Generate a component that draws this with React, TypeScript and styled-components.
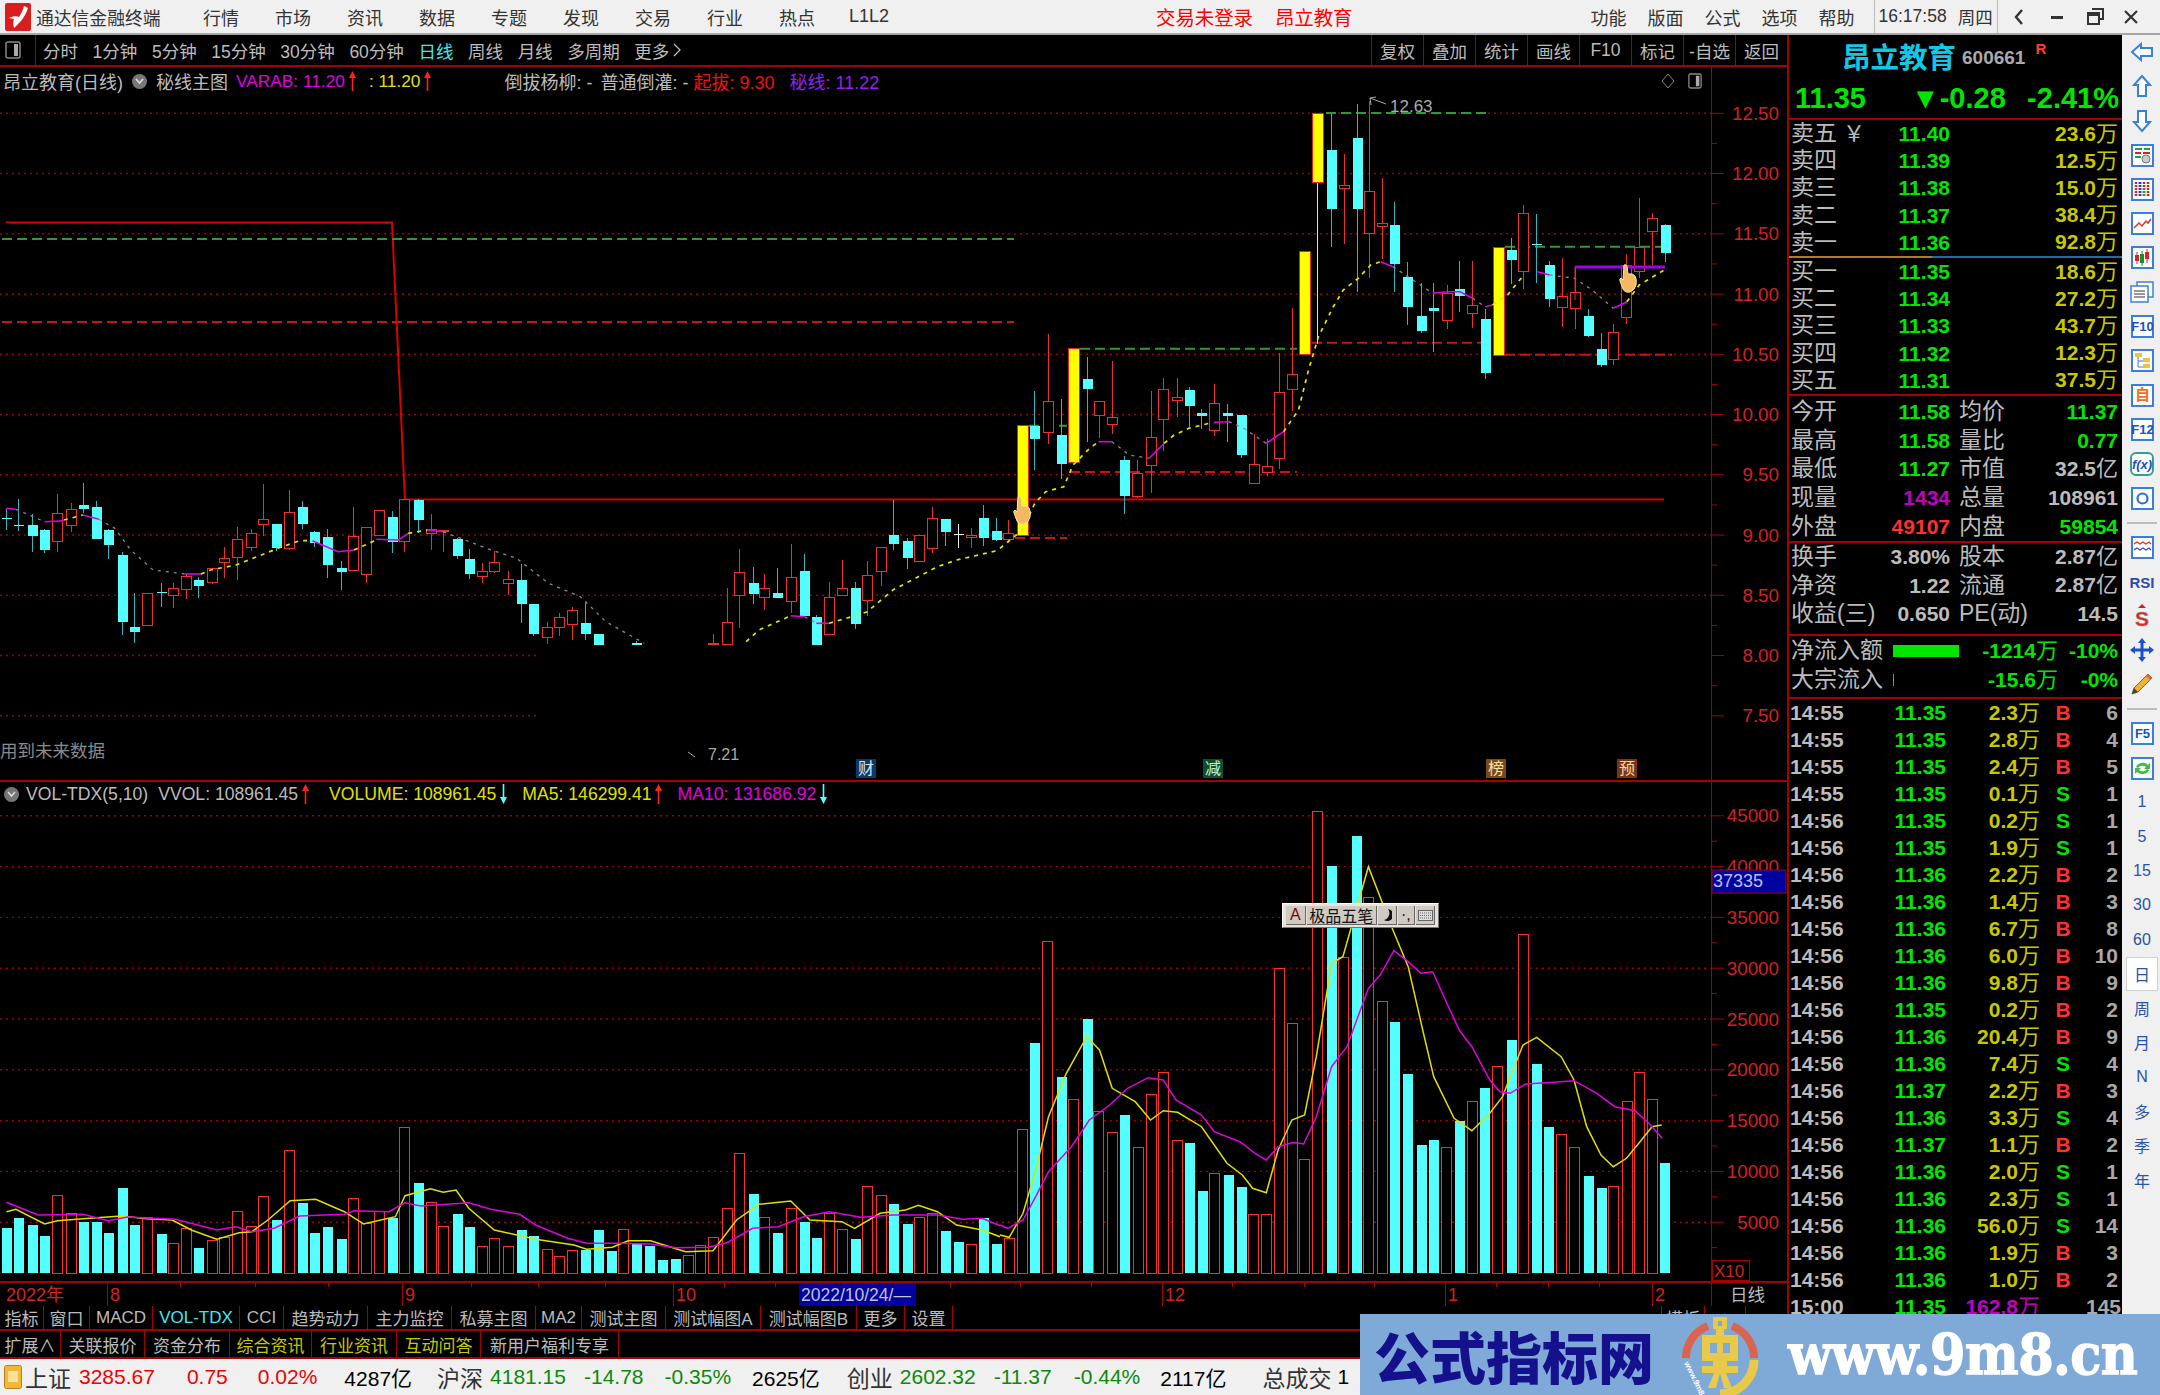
import * as React from "react";
import styled, { createGlobalStyle } from "styled-components";

const FONT = `"Liberation Sans", "Noto Sans CJK SC", sans-serif`;
const RED_LINE = "#a80000";
const GREEN = "#00e600";
const OLIVE = "#c8c800";
const GRAY = "#bcbcbc";

const GlobalStyle = createGlobalStyle`
  html, body { margin: 0; padding: 0; background: #000; }
  body { font-family: ${FONT}; overflow: hidden; }
  * { box-sizing: border-box; }
`;

/* ---------- page frame ---------- */
const Page = styled.div`
  position: relative;
  width: 2160px;
  height: 1395px;
  display: flex;
  flex-direction: column;
  overflow: hidden;
  background: #000;
`;
const Body = styled.div`
  display: flex;
  height: 1324px;
`;
const MainColumn = styled.div`
  width: 1787px;
  display: flex;
  flex-direction: column;
`;

/* ---------- title bar ---------- */
const TitleBar = styled.div`
  height: 35px;
  display: flex;
  align-items: center;
  background: #f0f0f0;
  border-bottom: 2px solid #a6a6a6;
  color: #333;
  font-size: 18px;
`;
const AppName = styled.span`
  margin-left: 5px;
  width: 149px;
  font-size: 17.8px;
  white-space: nowrap;
`;
const MenuItem = styled.span`
  width: 72px;
  text-align: center;
`;
const LoginInfo = styled.div`
  margin-left: 251px;
  display: flex;
  gap: 22px;
  color: #f00;
  font-size: 19.4px;
`;
const RightMenu = styled.div`
  margin-left: 238px;
  display: flex;
  gap: 21px;
`;
const ClockCell = styled.div`
  margin-left: 19px;
  height: 33px;
  display: flex;
  align-items: center;
  gap: 11px;
  padding: 0 4px;
  border-left: 1px solid #bbb;
  border-right: 1px solid #bbb;
  font-size: 17.5px;
  white-space: nowrap;
`;
const WindowButtons = styled.div`
  margin-left: 15px;
  display: flex;
  align-items: center;
  gap: 19px;
  color: #333;
`;

/* ---------- toolbar ---------- */
const Toolbar = styled.div`
  height: 32px;
  display: flex;
  align-items: stretch;
  background: #000;
  border-bottom: 2px solid ${RED_LINE};
  color: ${GRAY};
  font-size: 17.5px;
`;
const ToggleCell = styled.div`
  width: 36px;
  display: flex;
  align-items: center;
  justify-content: center;
  border-right: 1px solid ${RED_LINE};
  padding-right: 10px;
`;
const PeriodList = styled.div`
  margin-left: 7px;
  display: flex;
  align-items: center;
  gap: 14.6px;
`;
const Period = styled.span<{ $active?: boolean }>`
  white-space: nowrap;
  color: ${(p) => (p.$active ? "#40e8f0" : GRAY)};
`;
const ToolCells = styled.div`
  margin-left: auto;
  display: flex;
`;
const ToolCell = styled.div`
  width: 52px;
  display: flex;
  align-items: center;
  justify-content: center;
  border-left: 1px solid ${RED_LINE};
  white-space: nowrap;
`;

/* ---------- chart legends ---------- */
const InfoRow = styled.div`
  width: 1712px;
  height: 28px;
  display: flex;
  align-items: center;
  padding-left: 3px;
  border-right: 1px solid ${RED_LINE};
  font-size: 18px;
  white-space: nowrap;
  color: ${GRAY};
`;
const LegendRow = styled(InfoRow)`
  height: 24px;
  padding-left: 4px;
  font-size: 17.6px;
`;
const Tag = styled.span<{ $color?: string; $ml?: number; $size?: number }>`
  color: ${(p) => p.$color || GRAY};
  margin-left: ${(p) => p.$ml || 0}px;
  ${(p) => (p.$size ? `font-size: ${p.$size}px;` : "")}
`;
const RoundBadge = styled.span<{ $ml: number; $mr?: number }>`
  width: 15px;
  height: 15px;
  margin-left: ${(p) => p.$ml}px;
  margin-right: ${(p) => p.$mr ?? 7}px;
  border-radius: 50%;
  background: #777;
  display: inline-flex;
  align-items: center;
  justify-content: center;
  flex: none;
`;
const Corner = styled.div`
  margin-left: auto;
  display: flex;
  align-items: center;
  gap: 13px;
  padding-right: 9px;
`;

/* ---------- chart panes ---------- */
const PricePane = styled.div`
  height: 715px;
  border-bottom: 2px solid ${RED_LINE};
`;
const VolumePane = styled.div`
  position: relative;
  height: 501px;
  border-bottom: 2px solid ${RED_LINE};
`;
const ChartSvg = styled.svg`
  display: block;
  background: #000;
`;
const AxisText = styled.text`
  font-family: ${FONT};
  font-size: 18.8px;
  fill: #d42020;
  text-anchor: end;
  dominant-baseline: central;
`;
const ChartNote = styled.text<{ $color?: string; $size?: number }>`
  font-family: ${FONT};
  font-size: ${(p) => p.$size || 17}px;
  fill: ${(p) => p.$color || "#999"};
  dominant-baseline: central;
`;
const ImeBar = styled.div`
  position: absolute;
  left: 1282px;
  top: 121px;
  width: 157px;
  height: 25px;
  padding: 2px 3px;
  display: flex;
  gap: 1px;
  background: #e8e4dc;
  border: 1px solid #fff;
  border-right-color: #777;
  border-bottom-color: #777;
`;
const ImeCell = styled.span<{ $w: number; $color?: string }>`
  width: ${(p) => p.$w}px;
  display: flex;
  align-items: center;
  justify-content: center;
  background: #cfcbc3;
  border-right: 1px solid #666;
  border-bottom: 1px solid #666;
  font-size: 16px;
  color: ${(p) => p.$color || "#111"};
  white-space: nowrap;
`;

/* ---------- tab rows ---------- */
const TabRow = styled.div<{ $h: number }>`
  height: ${(p) => p.$h}px;
  display: flex;
  border-bottom: 2px solid ${RED_LINE};
  font-size: 17px;
  background: #000;
`;
const TabCell = styled.span<{ $w: number; $color?: string }>`
  width: ${(p) => p.$w}px;
  display: flex;
  align-items: center;
  justify-content: center;
  border-right: 1px solid ${RED_LINE};
  color: ${(p) => p.$color || GRAY};
  white-space: nowrap;
`;

/* ---------- quote panel ---------- */
const QuotePanel = styled.div`
  width: 335px;
  height: 100%;
  background: #000;
  border-left: 2px solid ${RED_LINE};
  overflow: hidden;
`;
const QuoteHead = styled.div`
  height: 85px;
  border-bottom: 2px solid ${RED_LINE};
`;
const NameRow = styled.div`
  height: 40px;
  display: flex;
  align-items: center;
  padding-left: 53px;
  white-space: nowrap;
`;
const StockName = styled.span`
  font-size: 28.5px;
  font-weight: 700;
  color: #10c8e8;
`;
const StockCode = styled.span`
  margin-left: 6px;
  padding-top: 5px;
  font-size: 19px;
  font-weight: 700;
  color: #aaa;
`;
const StockFlag = styled.sup`
  margin-left: 10px;
  font-size: 15px;
  font-weight: 700;
  color: #ff3a3a;
  align-self: flex-start;
  margin-top: 5px;
`;
const PriceRow = styled.div`
  height: 43px;
  display: flex;
  align-items: center;
  padding: 3px 3px 0 6px;
  color: ${GREEN};
  font-size: 29px;
  font-weight: 700;
  white-space: nowrap;
`;
const DepthGrid = styled.div<{ $pt?: number; $pb?: number }>`
  padding-top: ${(p) => p.$pt || 0}px;
  padding-bottom: ${(p) => p.$pb || 0}px;
`;
const SplitLine = styled.div`
  height: 2px;
  background: linear-gradient(to right, #b07a28 0 143px, #2a68a0 143px);
`;
const Rule = styled.div`
  height: 2px;
  background: ${RED_LINE};
`;
const Row = styled.div<{ $h: number; $cols: string }>`
  height: ${(p) => p.$h}px;
  display: grid;
  grid-template-columns: ${(p) => p.$cols};
  grid-template-rows: 100%;
  align-items: center;
  line-height: 1;
  white-space: nowrap;
`;
const Label = styled.span<{ $pl?: number }>`
  padding-left: ${(p) => p.$pl ?? 2}px;
  font-size: 23px;
  color: ${GRAY};
  letter-spacing: 0;
`;
const Num = styled.span<{ $color?: string; $center?: boolean }>`
  font-size: 21px;
  font-weight: 700;
  text-align: ${(p) => (p.$center ? "center" : "right")};
  color: ${(p) => p.$color || GREEN};
`;
const Unit = styled.span`
  font-weight: 400;
  font-size: 22px;
`;
const TimeCell = styled.span`
  padding-left: 1px;
  font-size: 21px;
  font-weight: 700;
  color: ${GRAY};
`;
const FlowBar = styled.span`
  display: block;
  height: 12px;
  background: ${GREEN};
`;

/* ---------- right icon rail ---------- */
const Rail = styled.div`
  width: 38px;
  display: flex;
  flex-direction: column;
  align-items: center;
  background: #f0f0f0;
  padding-left: 2px;
`;
const RailItem = styled.div<{ $active?: boolean }>`
  width: 32px;
  height: 34.3px;
  flex: none;
  display: flex;
  align-items: center;
  justify-content: center;
  font-size: 16px;
  color: #2a52a8;
  background: ${(p) => (p.$active ? "#fff" : "transparent")};
  box-shadow: ${(p) => (p.$active ? "inset 0 0 0 1px #d0d0d0" : "none")};
`;
const RailSep = styled.div`
  width: 30px;
  height: 15px;
  flex: none;
  display: flex;
  align-items: center;
  &::after {
    content: "";
    width: 100%;
    height: 2px;
    background: #bdbdbd;
  }
`;

/* ---------- status bar + banner ---------- */
const StatusBar = styled.div`
  height: 36px;
  display: flex;
  align-items: center;
  padding-left: 4px;
  background: #f0f0f0;
  font-size: 21px;
  white-space: nowrap;
`;
const StatusTag = styled.span<{ $ml: number; $color?: string; $bold?: boolean; $size?: number }>`
  margin-left: ${(p) => p.$ml}px;
  color: ${(p) => p.$color || "#333"};
  font-size: ${(p) => p.$size || 21}px;
  font-weight: ${(p) => (p.$bold ? 700 : 400)};
`;
const Banner = styled.div`
  position: absolute;
  right: 0;
  bottom: 0;
  width: 800px;
  height: 81px;
  display: flex;
  align-items: center;
  padding-left: 14px;
  background: #7faad8;
`;
const BannerTitle = styled.span`
  width: 306px;
  font-size: 56px;
  font-weight: 900;
  color: #15108c;
  white-space: nowrap;
`;
const BannerUrl = styled.span`
  margin-left: 28px;
  font-family: "DejaVu Serif", "Liberation Serif", serif;
  font-size: 51px;
  font-weight: 700;
  color: #fff;
  letter-spacing: -0.6px;
  -webkit-text-stroke: 1.2px #fff;
  white-space: nowrap;
  transform: scaleY(1.08);
`;

/* ---------- traced chart data (coordinates as read off the crops) ---------- */
type Kind = "r" | "c" | "y" | "w";
type Candle = [number, Kind, number, number, number, number];
const px7 = (x: number, y: number): [number, number] => [1000 + x / 2.01, 60 + y / 3];
const px8 = (x: number, y: number): [number, number] => [x / 1.568, 470 + y / 3];

const leftCandles: Candle[] = [
  [10, "c", 115, 140, 143, 178], [29, "c", 85, 161, 164, 180], [50, "c", 130, 161, 196, 242],
  [69, "c", 175, 178, 237, 245], [90, "r", 70, 130, 213, 242], [111, "r", 95, 117, 164, 182],
  [130, "c", 35, 102, 115, 125], [151, "c", 90, 107, 205, 205], [170, "c", 175, 176, 222, 263],
  [191, "c", 243, 251, 453, 493], [210, "c", 365, 467, 484, 516], [231, "r", 368, 368, 466, 466],
  [252, "c", 335, 364, 367, 408], [271, "r", 335, 355, 375, 412], [292, "r", 310, 318, 358, 385],
  [311, "c", 318, 328, 345, 380], [332, "r", 292, 293, 335, 340], [351, "r", 228, 265, 277, 322],
  [372, "r", 167, 207, 262, 327], [393, "r", 175, 188, 232, 240], [413, "r", 40, 148, 163, 195],
  [433, "c", 160, 160, 232, 240], [453, "r", 58, 125, 235, 237], [473, "c", 90, 107, 160, 175],
  [493, "c", 180, 184, 215, 228], [513, "c", 175, 197, 282, 322], [534, "c", 270, 291, 304, 358],
  [554, "r", 108, 198, 300, 300], [574, "r", 170, 170, 312, 335], [594, "r", 120, 120, 195, 195],
  [614, "c", 120, 138, 212, 245], [634, "r", 87, 87, 213, 243], [655, "c", 85, 88, 147, 185],
  [676, "r", 130, 177, 190, 238], [695, "r", 178, 180, 184, 242], [716, "c", 200, 203, 255, 265],
  [735, "c", 233, 265, 310, 325], [756, "r", 275, 302, 317, 335], [775, "r", 240, 275, 303, 305],
  [796, "r", 300, 328, 340, 373], [817, "c", 280, 328, 398, 455], [836, "c", 400, 400, 490, 495],
  [857, "r", 453, 470, 500, 520], [876, "r", 427, 442, 470, 495], [897, "r", 408, 420, 462, 508],
  [917, "c", 395, 455, 488, 508], [937, "c", 490, 490, 522, 522], [998, "c", 510, 516, 522, 522],
  [1118, "r", 490, 520, 522, 522], [1140, "r", 350, 455, 522, 522], [1158, "r", 235, 305, 376, 470],
  [1180, "c", 288, 337, 368, 400], [1198, "r", 310, 355, 380, 418], [1219, "c", 292, 365, 382, 382],
  [1240, "r", 220, 320, 393, 427], [1260, "c", 250, 300, 436, 436], [1280, "c", 432, 437, 522, 522],
  [1300, "r", 332, 382, 493, 493], [1320, "r", 268, 355, 376, 376], [1340, "c", 332, 350, 458, 475],
  [1360, "r", 270, 315, 390, 435], [1381, "r", 230, 230, 303, 345], [1400, "c", 88, 193, 219, 238],
  [1422, "c", 200, 211, 260, 295], [1441, "r", 194, 194, 272, 272], [1462, "r", 108, 145, 235, 245],
  [1482, "c", 143, 143, 183, 225], [1502, "w", 160, 188, 191, 232], [1522, "r", 170, 194, 201, 232],
  [1542, "c", 103, 140, 200, 225],
];
const rightCandles: Candle[] = [
  [-8, "c", 1370, 1410, 1438, 1440], [17, "r", 1378, 1420, 1438, 1445], [44, "y", 1095, 1095, 1425, 1425],
  [69, "c", 990, 1095, 1133, 1228], [96, "r", 820, 1024, 1115, 1150], [123, "c", 1013, 1122, 1210, 1255],
  [147, "y", 865, 865, 1205, 1205], [174, "c", 888, 955, 985, 1142], [199, "r", 1023, 1023, 1065, 1130],
  [225, "r", 900, 1070, 1092, 1120], [250, "c", 1185, 1198, 1305, 1360], [276, "r", 1198, 1238, 1308, 1310],
  [303, "r", 990, 1132, 1214, 1295], [328, "r", 950, 988, 1078, 1170], [355, "r", 950, 1010, 1020, 1068],
  [379, "c", 978, 987, 1035, 1098], [405, "c", 1045, 1055, 1066, 1105], [430, "r", 968, 1028, 1110, 1125],
  [457, "c", 1030, 1055, 1065, 1143], [485, "c", 1063, 1063, 1183, 1192], [510, "r", 1118, 1213, 1268, 1268],
  [536, "r", 1135, 1218, 1235, 1245], [561, "r", 875, 996, 1195, 1225], [587, "r", 740, 942, 988, 1050],
  [612, "y", 572, 572, 882, 882], [638, "y", 158, 158, 365, 850], [665, "c", 160, 266, 445, 558],
  [691, "r", 280, 375, 385, 548], [717, "c", 130, 230, 445, 692], [742, "r", 120, 394, 520, 652],
  [768, "r", 352, 488, 498, 595], [792, "c", 424, 492, 610, 692], [819, "c", 604, 649, 737, 792],
  [846, "c", 667, 766, 810, 815], [871, "c", 667, 740, 750, 872], [898, "r", 672, 698, 780, 805],
  [922, "c", 600, 685, 706, 752], [949, "r", 600, 735, 760, 800], [974, "c", 745, 775, 935, 955],
  [1000, "y", 560, 560, 885, 885], [1027, "c", 532, 568, 598, 670], [1052, "r", 433, 460, 632, 683],
  [1078, "c", 460, 550, 553, 666], [1103, "c", 600, 613, 715, 738], [1130, "r", 590, 708, 740, 797],
  [1155, "r", 620, 695, 745, 805], [1182, "c", 743, 766, 824, 828], [1208, "c", 815, 865, 913, 918],
  [1233, "r", 790, 816, 898, 913], [1259, "r", 578, 614, 772, 790], [1285, "r", 410, 562, 632, 650],
  [1311, "r", 455, 474, 512, 612], [1336, "c", 490, 491, 576, 604],
];

type Seg = ["y" | "g" | "m", number[]];
const leftTrend: Seg[] = [
  ["m", [10, 115, 25, 118]], ["g", [25, 118, 70, 155]], ["m", [70, 155, 100, 152]], ["y", [100, 150, 130, 135]],
  ["m", [130, 135, 155, 148]], ["g", [155, 148, 180, 175, 205, 240, 240, 300, 290, 312]], ["m", [290, 312, 315, 312]],
  ["y", [315, 312, 330, 300, 370, 285, 440, 232, 470, 212, 490, 212]], ["m", [490, 212, 530, 245, 555, 240]],
  ["y", [555, 240, 590, 210]], ["m", [590, 208, 625, 210, 640, 190]], ["y", [640, 190, 670, 180]], ["m", [670, 180, 695, 185]],
  ["g", [695, 185, 770, 240, 810, 265, 860, 340, 910, 380, 950, 455, 1010, 520]],
  ["y", [1170, 515, 1190, 480, 1240, 437]], ["m", [1240, 437, 1262, 440]], ["g", [1262, 440, 1280, 460]], ["m", [1280, 460, 1300, 460]],
  ["y", [1300, 460, 1345, 435, 1360, 425, 1400, 360, 1470, 290, 1500, 270, 1568, 240]],
];
const rightTrend: Seg[] = [
  ["y", [0, 1465, 20, 1440, 45, 1410, 70, 1330, 92, 1295, 128, 1280, 147, 1215, 180, 1165, 198, 1145]],
  ["m", [198, 1145, 225, 1145]], ["g", [225, 1145, 260, 1185, 300, 1195]], ["m", [300, 1195, 330, 1150]],
  ["y", [330, 1150, 350, 1125, 380, 1105, 420, 1090]], ["m", [430, 1087, 460, 1085]], ["g", [460, 1085, 490, 1105, 535, 1150]],
  ["m", [535, 1150, 570, 1115]], ["y", [570, 1115, 600, 1050, 620, 930, 640, 830, 670, 740, 690, 690, 720, 655, 745, 615, 765, 605]],
  ["m", [765, 605, 790, 620]], ["g", [790, 620, 830, 660, 870, 700]], ["m", [870, 700, 900, 695, 925, 695, 950, 715]],
  ["g", [950, 715, 975, 740]], ["m", [975, 740, 990, 735]], ["y", [990, 735, 1020, 705, 1050, 650]],
  ["m", [1080, 635, 1105, 645]], ["g", [1105, 645, 1155, 655, 1190, 690, 1233, 745]], ["m", [1233, 745, 1260, 725]],
  ["y", [1260, 725, 1285, 675, 1335, 630]],
];

// volume tops: [x on crop, kind, top on crop]
const volLeft: [number, Kind, number][] = [
  [10,"c",1342],[29,"c",1310],[50,"c",1333],[69,"c",1365],[90,"r",1244],[111,"r",1298],[130,"c",1324],[151,"c",1324],[170,"c",1356],
  [191,"c",1221],[210,"c",1333],[231,"r",1312],[252,"c",1360],[271,"r",1388],[292,"r",1343],[311,"c",1400],[332,"r",1380],[351,"r",1370],
  [372,"r",1294],[393,"r",1338],[413,"r",1249],[433,"c",1316],[453,"r",1109],[473,"c",1265],[493,"c",1356],[513,"c",1338],[534,"c",1373],
  [554,"r",1253],[574,"r",1330],[594,"r",1292],[614,"c",1311],[634,"r",1042],[655,"c",1207],[676,"r",1267],[695,"r",1338],[716,"c",1298],
  [735,"c",1338],[756,"r",1398],[775,"r",1375],[796,"r",1398],[817,"c",1347],[836,"c",1365],[857,"r",1407],[876,"r",1428],[897,"r",1411],
  [917,"c",1407],[937,"c",1347],[958,"c",1410],[977,"r",1348],[998,"c",1385],[1018,"c",1396],[1038,"c",1437],[1058,"c",1433],[1078,"r",1425],
  [1098,"r",1395],[1118,"r",1370],[1140,"r",1285],[1158,"r",1118],[1180,"c",1239],[1198,"r",1312],[1219,"c",1356],[1240,"r",1285],[1260,"c",1324],
  [1280,"c",1370],[1300,"r",1298],[1320,"r",1348],[1340,"c",1374],[1360,"r",1217],[1381,"r",1244],[1400,"c",1270],[1422,"c",1329],[1441,"r",1312],
  [1462,"r",1298],[1482,"c",1351],[1502,"c",1383],[1522,"r",1392],[1542,"c",1312],[1562,"c",1388],
];
const volRight: [number, Kind, number][] = [
  [18,"r",1375],[44,"r",1047],[67,"c",785],[93,"r",484],[120,"c",888],[143,"r",957],[170,"c",713],[193,"r",992],[220,"r",1056],[243,"c",1001],
  [270,"r",1101],[296,"r",943],[320,"r",876],[346,"r",1079],[370,"c",1086],[396,"c",1230],[420,"r",1178],[446,"c",1181],[472,"c",1217],[496,"r",1303],
  [522,"r",1303],[546,"r",565],[572,"r",728],[596,"r",1137],[622,"r",92],[648,"c",254],[672,"r",530],[698,"c",164],[722,"r",350],[748,"r",664],
  [772,"c",722],[798,"c",879],[825,"c",1091],[848,"c",1077],[875,"r",1101],[899,"c",1019],[925,"r",962],[948,"c",920],[975,"r",858],[1002,"c",776],
  [1025,"r",462],[1050,"c",848],[1075,"c",1037],[1100,"r",1061],[1125,"r",1101],[1152,"c",1185],[1178,"c",1221],[1202,"r",1217],[1228,"r",962],
  [1252,"r",876],[1278,"r",957],[1301,"c",1145],
];
const ma5L = [10,1295,25,1288,70,1332,90,1322,130,1316,190,1308,230,1316,270,1320,300,1350,340,1378,375,1358,395,1355,420,1320,455,1262,495,1258,540,1295,570,1332,620,1310,635,1247,675,1226,695,1237,715,1230,735,1285,775,1350,840,1378,900,1395,920,1408,960,1402,985,1382,1020,1382,1075,1415,1118,1412,1155,1320,1190,1273,1240,1263,1270,1320,1320,1325,1340,1345,1380,1300,1420,1290,1440,1276,1470,1295,1500,1335,1540,1350,1568,1370];
const ma10L = [10,1267,60,1305,130,1303,170,1322,200,1311,240,1315,275,1318,340,1350,370,1340,395,1355,430,1345,470,1308,540,1303,555,1292,610,1295,635,1268,660,1278,735,1268,770,1288,815,1303,840,1335,890,1375,920,1390,970,1390,1020,1392,1060,1403,1110,1402,1140,1388,1180,1345,1220,1340,1260,1310,1300,1295,1350,1312,1400,1305,1470,1305,1510,1318,1540,1315,1568,1337];
const ma5R = [0,1365,18,1372,45,1300,70,1170,95,1010,130,880,170,770,195,810,220,925,265,965,295,1020,320,992,348,997,395,1040,445,1150,475,1185,495,1225,522,1238,545,1110,572,1020,597,1005,620,830,650,550,672,530,722,260,770,450,800,560,830,760,850,890,890,1015,925,1052,960,1000,985,950,1000,890,1025,795,1052,772,1100,830,1125,900,1150,1040,1178,1125,1202,1160,1228,1135,1252,1090,1278,1040,1297,1035];
const ma10R = [0,1335,15,1345,45,1320,70,1250,95,1175,140,1100,175,1020,215,975,250,925,290,893,320,900,345,960,395,1005,420,1055,470,1085,500,1120,522,1140,545,1100,575,1087,595,1092,620,1010,650,860,680,800,722,625,745,585,772,512,800,545,825,580,848,575,870,650,900,750,925,800,960,900,980,935,1000,940,1030,912,1085,907,1125,902,1170,940,1205,980,1245,992,1275,1035,1298,1075];

const toPoints = (raw: number[], map: (x: number, y: number) => [number, number]) => {
  const out: string[] = [];
  for (let i = 0; i < raw.length; i += 2) {
    const [x, y] = map(raw[i], raw[i + 1]);
    out.push(`${x.toFixed(1)},${y.toFixed(1)}`);
  }
  return out.join(" ");
};

const CANDLE_COLORS = { r: "#f02c2c", c: "#55ffff", y: "#ffff00", w: "#f0f0f0" };

const CandleMark = ({ c, map }: { c: Candle; map: (x: number, y: number) => [number, number] }) => {
  const [zx, kind, hi, top, bot, lo] = c;
  const x = Math.round(map(zx, 0)[0]) + 0.5;
  const yOf = (v: number) => Math.round(map(0, v)[1]) + 0.5;
  const color = CANDLE_COLORS[kind];
  const wick = kind === "c" ? "#2cb8c0" : color;
  const w = kind === "y" ? 11 : 10;
  return (
    <g shapeRendering="crispEdges">
      <line x1={x} x2={x} y1={yOf(hi)} y2={yOf(lo)} stroke={wick} strokeWidth={1} />
      <rect
        x={x - w / 2}
        y={yOf(top)}
        width={w}
        height={Math.max(yOf(bot) - yOf(top), 1)}
        fill={kind === "r" ? "#000" : color}
        stroke={kind === "y" ? "#e82020" : kind === "r" ? color : "none"}
        strokeWidth={1}
      />
    </g>
  );
};

const Trend = ({ seg, map }: { seg: Seg; map: (x: number, y: number) => [number, number] }) => {
  const [k, raw] = seg;
  const styleOf = {
    y: { stroke: "#e6e600", strokeWidth: 1.7, strokeDasharray: "4 5" },
    g: { stroke: "#8a8a8a", strokeWidth: 1.3, strokeDasharray: "3 5" },
    m: { stroke: "#e000e8", strokeWidth: 1.6, strokeDasharray: undefined },
  }[k];
  return <polyline points={toPoints(raw, map)} fill="none" {...styleOf} />;
};

const Pointer = ({ x, y }: { x: number; y: number }) => (
  <g transform={`translate(${x - 9} ${y - 16})`}>
    <path
      d="M5 1 q2-1 3 1 l1 8 q5-1 7 2 q2 3 1 9 q-1 5-6 7 q-5 1-7-3 l-3-8 q-1-2 1-3 l2 2 z"
      fill="#f4b860"
      stroke="#ffe4b0"
      strokeWidth={1}
    />
  </g>
);

const PriceChart = () => {
  const prices = [12.5, 12, 11.5, 11, 10.5, 10, 9.5, 9, 8.5, 8, 7.5];
  const yOf = (p: number) => 113.3 + (12.5 - p) * 120.5;
  const minor = [12.25, 11.75, 11.25, 10.75, 10.25, 9.75, 9.25, 8.75, 8.25, 7.75];
  return (
    <ChartSvg width={1787} height={685} viewBox="0 95 1787 685">
      {prices.map((p) => (
        <line
          key={p}
          x1={0}
          x2={p < 8.5 ? 537 : 1711}
          y1={yOf(p)}
          y2={yOf(p)}
          stroke="#a00000"
          strokeWidth={1.4}
          strokeDasharray="2 4"
        />
      ))}
      {/* support / resistance levels */}
      <polyline points="6,222.5 392,222.5 405,500" fill="none" stroke="#d80000" strokeWidth={2} />
      <line x1={405} x2={1664} y1={499.5} y2={499.5} stroke="#d80000" strokeWidth={2} />
      {[[2, 1014, 239], [1326, 1490, 113], [1080, 1297, 348.7], [1505, 1665, 246.7], [1029, 1067, 425.7]].map(([a, b, y]) => (
        <line key={a} x1={a} x2={b} y1={y} y2={y} stroke="#2f9a2f" strokeWidth={2} strokeDasharray="10 5" />
      ))}
      {[[2, 1014, 322], [1312, 1488, 342.7], [1070, 1297, 472], [1505, 1672, 354.7], [1000, 1067, 538]].map(([a, b, y]) => (
        <line key={a} x1={a} x2={b} y1={y} y2={y} stroke="#c81414" strokeWidth={2} strokeDasharray="10 5" />
      ))}
      {leftCandles.map((c) => (
        <CandleMark key={c[0]} c={c} map={px8} />
      ))}
      {rightCandles.map((c) => (
        <CandleMark key={c[0]} c={c} map={px7} />
      ))}
      {leftTrend.map((s, i) => (
        <Trend key={i} seg={s} map={px8} />
      ))}
      {rightTrend.map((s, i) => (
        <Trend key={i} seg={s} map={px7} />
      ))}
      <line x1={1575} x2={1665} y1={267} y2={267} stroke="#a000f0" strokeWidth={3} />
      <line x1={1575} x2={1575} y1={267} y2={300} stroke="#e82828" strokeWidth={1} />
      <Pointer x={1022} y={512} />
      <Pointer x={1628} y={280} />

      <path d="M1386 104 L1370 98 M1370 98 l1 7 M1370 98 l6 -1" stroke="#aaa" strokeWidth={1} fill="none" />
      <ChartNote x={1390} y={106} $size={17} $color="#aaa">12.63</ChartNote>
      <path d="M688 752 l7 5" stroke="#aaa" strokeWidth={1} fill="none" />
      <ChartNote x={708} y={754} $size={16} $color="#aaa">7.21</ChartNote>
      <ChartNote x={0} y={751} $size={17.5} $color="#8a8a8a">用到未来数据</ChartNote>

      {[
        [866, "财", "#0c3a68", "#d8e8f8"],
        [1213, "减", "#0c5030", "#c8f0d0"],
        [1496, "榜", "#7a4a10", "#f8e0b0"],
        [1627, "预", "#7a3410", "#f8d8b0"],
      ].map(([x, t, bg, fg]) => (
        <g key={t as string}>
          <rect x={(x as number) - 10} y={759} width={20} height={19} fill={bg as string} />
          <ChartNote x={(x as number) - 8} y={768} $size={16} $color={fg as string}>{t}</ChartNote>
        </g>
      ))}

      {/* price axis */}
      <line x1={1711.5} x2={1711.5} y1={95} y2={780} stroke={RED_LINE} strokeWidth={1} />
      {prices.map((p) => (
        <g key={p}>
          <line x1={1711} x2={1724} y1={yOf(p)} y2={yOf(p)} stroke={RED_LINE} />
          <AxisText x={1779} y={yOf(p)}>{p.toFixed(2)}</AxisText>
        </g>
      ))}
      {minor.map((p) => (
        <line key={p} x1={1711} x2={1717} y1={yOf(p)} y2={yOf(p)} stroke={RED_LINE} />
      ))}
    </ChartSvg>
  );
};

const VolBar = ({ x, kind, top }: { x: number; kind: Kind; top: number }) => {
  const left = Math.round(x - 5) + 0.5;
  const y = Math.round(top) + 0.5;
  return (
    <rect
      x={left}
      y={y}
      width={10}
      height={1273 - y}
      fill={kind === "c" ? "#55ffff" : "#000"}
      stroke={kind === "c" ? "none" : "#ff2c2c"}
      shapeRendering="crispEdges"
    />
  );
};

const VolumeChart = () => {
  const levels = [45000, 40000, 35000, 30000, 25000, 20000, 15000, 10000, 5000];
  const yOf = (v: number) => 1273 - (v / 5000) * 50.8;
  const v9 = (x: number, y: number): [number, number] => [1000 + x / 1.96, 780 + y / 3];
  const v10 = (x: number, y: number): [number, number] => [x / 1.568, 780 + y / 3];
  return (
    <ChartSvg width={1787} height={475} viewBox="0 806 1787 475">
      {levels.map((v) => (
        <line key={v} x1={0} x2={1711} y1={yOf(v)} y2={yOf(v)} stroke="#a00000" strokeWidth={1.4} strokeDasharray="2 4" />
      ))}
      {volLeft.map(([x, k, t]) => (
        <VolBar key={x} x={x / 1.568} kind={k} top={780 + t / 3} />
      ))}
      {volRight.map(([x, k, t]) => (
        <VolBar key={x} x={1000 + x / 1.96} kind={k} top={780 + t / 3} />
      ))}
      <polyline points={toPoints(ma5L, v10)} fill="none" stroke="#e0e000" strokeWidth={1.5} />
      <polyline points={toPoints(ma5R, v9)} fill="none" stroke="#e0e000" strokeWidth={1.5} />
      <polyline points={toPoints(ma10L, v10)} fill="none" stroke="#e000e0" strokeWidth={1.5} />
      <polyline points={toPoints(ma10R, v9)} fill="none" stroke="#e000e0" strokeWidth={1.5} />

      <line x1={1711.5} x2={1711.5} y1={806} y2={1281} stroke={RED_LINE} />
      {levels.map((v) => (
        <g key={v}>
          <line x1={1711} x2={1724} y1={yOf(v)} y2={yOf(v)} stroke={RED_LINE} />
          <AxisText x={1779} y={yOf(v)}>{v}</AxisText>
          <line x1={1711} x2={1717} y1={yOf(v) + 25.4} y2={yOf(v) + 25.4} stroke={RED_LINE} />
        </g>
      ))}
      <rect x={1712} y={870} width={74} height={23} fill="#0000a0" stroke={RED_LINE} />
      <ChartNote x={1713} y={881} $size={18} $color="#b8c0e8">37335</ChartNote>
      <rect x={1712.5} y={1260.5} width={37} height={20} fill="#000" stroke={RED_LINE} />
      <ChartNote x={1714} y={1271} $size={17} $color="#d42020">X10</ChartNote>
    </ChartSvg>
  );
};

const DateAxis = () => {
  const months: [number, string][] = [[107, "8"], [402, "9"], [673, "10"], [1162, "12"], [1445, "1"], [1652, "2"]];
  const ticks = [180, 255, 328, 471, 538, 605, 724, 775, 950, 1020, 1091, 1232, 1304, 1374, 1496, 1548, 1599];
  return (
    <ChartSvg width={1787} height={23} viewBox="0 1283 1787 23">
      <ChartNote x={6} y={1295} $size={18} $color="#d42020">2022年</ChartNote>
      {months.map(([x, t]) => (
        <g key={t}>
          <line x1={x + 0.5} x2={x + 0.5} y1={1283} y2={1306} stroke={RED_LINE} />
          <ChartNote x={x + 3} y={1295} $size={18} $color="#d42020">{t}</ChartNote>
        </g>
      ))}
      {ticks.map((x) => (
        <line key={x} x1={x + 0.5} x2={x + 0.5} y1={1283} y2={1287} stroke={RED_LINE} />
      ))}
      <rect x={799} y={1283} width={117} height={23} fill="#0000a0" />
      <ChartNote x={801} y={1295} $size={17.5} $color="#c4c4c4">2022/10/24/—</ChartNote>
      <line x1={1711.5} x2={1711.5} y1={1283} y2={1306} stroke={RED_LINE} />
      <ChartNote x={1730} y={1295} $size={17.5} $color={GRAY}>日线</ChartNote>
    </ChartSvg>
  );
};

/* ---------- small drawings ---------- */
const AppLogo = () => (
  <svg width="26" height="28" viewBox="0 0 26 28" style={{ marginLeft: 5, flex: "none" }}>
    <rect width="26" height="28" rx="2" fill="#d81e1e" />
    <path d="M19 3 L23 5 C21 12 16 19 9 25 C8 21 8 18 9 16 L4 15 C8 13 12 13 14 14 C16 11 18 7 19 3Z" fill="#fff" />
  </svg>
);
const PanelToggle = ({ size = 16 }: { size?: number }) => (
  <svg width={size} height={size + 2} viewBox="0 0 16 18">
    <rect x="1" y="1" width="14" height="16" rx="2" fill="none" stroke="#888" strokeWidth="1.5" />
    <rect x="9" y="3" width="4" height="12" fill="#aaa" />
  </svg>
);
const Chevron = () => (
  <svg width="10" height="16" viewBox="0 0 10 16" style={{ marginLeft: 3 }}>
    <path d="M2 2 L8 8 L2 14" fill="none" stroke={GRAY} strokeWidth="1.3" />
  </svg>
);
const TickArrow = ({ up, color }: { up?: boolean; color: string }) => (
  <svg width="9" height="22" viewBox="0 0 9 22" style={{ marginLeft: 3, flex: "none" }}>
    {up ? (
      <path d="M4.5 1 L8 8 H5.3 V21 H3.7 V8 H1Z" fill={color} />
    ) : (
      <path d="M4.5 21 L8 14 H5.3 V1 H3.7 V14 H1Z" fill={color} />
    )}
  </svg>
);
const ChevronBadge = () => (
  <svg width="9" height="7" viewBox="0 0 9 7">
    <path d="M1 1 L4.5 5 L8 1" fill="none" stroke="#ddd" strokeWidth="1.6" />
  </svg>
);

const BannerLogo = () => (
  <svg width="80" height="81" viewBox="0 0 80 81" style={{ flex: "none" }}>
    <path d="M6 44 A34 34 0 0 1 28 12" fill="none" stroke="#d96550" strokeWidth="8" />
    <path d="M52 12 A34 34 0 0 1 74 44" fill="none" stroke="#d96550" strokeWidth="8" />
    <path d="M74 46 A34 34 0 0 1 40 80" fill="none" stroke="#e8c94a" strokeWidth="9" />
    <path
      d="M33 3 h14 v12 h-3 v6 h14 v26 h-11 v5 h11 v7 h-12 l6 15 h-8 l-4 -15 l-4 15 h-8 l6 -15 h-12 v-7 h11 v-5 h-11 v-26 h14 v-6 h-3z"
      fill="#e8c94a"
    />
    <rect x="30" y="29" width="7" height="10" fill="#7faad8" />
    <rect x="43" y="29" width="7" height="10" fill="#7faad8" />
    <rect x="38" y="7" width="4" height="5" fill="#7faad8" />
    <text x="0" y="0" transform="translate(4 49) rotate(64)" fontSize="8" fontWeight="700" fill="#fff" fontFamily={FONT}>
      www.9m8.cn
    </text>
  </svg>
);

const Frame = ({ children }: { children?: React.ReactNode }) => (
  <svg width="23" height="23" viewBox="0 0 23 23">
    <rect x="1" y="1" width="21" height="21" fill="#fff" stroke="#3a80d8" strokeWidth="2" />
    {children}
  </svg>
);
const ArrowShape = ({ d }: { d: string }) => (
  <svg width="24" height="24" viewBox="0 0 24 24">
    <path d={d} fill="#fff" stroke="#3a80d8" strokeWidth="2" />
  </svg>
);
const iconText = (t: string, color = "#2050c0", size = 13) => (
  <text x="11.5" y="16" textAnchor="middle" fontSize={size} fontWeight="700" fill={color} fontFamily={FONT}>
    {t}
  </text>
);

const railIcons: React.ReactNode[] = [
  <ArrowShape d="M2 12 L11 4 V8 H22 V16 H11 V20Z" />,
  <ArrowShape d="M12 2 L20 11 H16 V22 H8 V11 H4Z" />,
  <ArrowShape d="M12 22 L20 13 H16 V2 H8 V13 H4Z" />,
  <Frame>
    <path d="M4 5 h7 M13 5 h6" stroke="#20a040" strokeWidth="2" />
    <path d="M4 9 h6 M12 9 h7" stroke="#e02020" strokeWidth="2" />
    <path d="M4 13 h6" stroke="#20a040" strokeWidth="2" />
    <circle cx="15" cy="15" r="4" fill="#ccc" stroke="#777" />
  </Frame>,
  <Frame>
    <path d="M5 4 v15 M9 4 v15 M13 4 v15 M17 4 v15" stroke="#e02020" strokeWidth="2.5" strokeDasharray="2 1" />
    <path d="M9 4 v15" stroke="#2040d0" strokeWidth="2.5" strokeDasharray="2 1" />
    <path d="M13 10 v9" stroke="#20a040" strokeWidth="2.5" strokeDasharray="2 1" />
  </Frame>,
  <Frame>
    <path d="M3 16 L8 11 L11 14 L15 9 L17 11 L20 7" fill="none" stroke="#e03030" strokeWidth="1.5" />
  </Frame>,
  <Frame>
    <path d="M6 6 v12 M16 3 v14" stroke="#e02020" />
    <rect x="4" y="9" width="4" height="6" fill="#e02020" />
    <path d="M11 5 v15" stroke="#109030" />
    <rect x="9" y="8" width="4" height="9" fill="#109030" />
    <rect x="14" y="6" width="4" height="7" fill="#e02020" />
  </Frame>,
  <svg width="24" height="22" viewBox="0 0 24 22">
    <rect x="7" y="1" width="16" height="15" fill="#fff" stroke="#3a80d8" strokeWidth="1.5" />
    <rect x="1" y="5" width="17" height="16" fill="#fff" stroke="#3a80d8" strokeWidth="1.5" />
    <path d="M4 10 h11 M4 13 h11 M4 16 h11" stroke="#777" strokeWidth="1.5" />
  </svg>,
  <Frame>{iconText("F10")}</Frame>,
  <Frame>
    <path d="M7 8 V18 H12 M7 12 H12" fill="none" stroke="#3a80d8" />
    <rect x="4" y="4" width="7" height="4" fill="#f0c040" />
    <rect x="12" y="9" width="7" height="4" fill="#f0c040" />
    <rect x="12" y="15" width="7" height="4" fill="#f0c040" />
  </Frame>,
  <Frame>{iconText("自", "#f07020", 15)}</Frame>,
  <Frame>{iconText("F12")}</Frame>,
  <svg width="24" height="24" viewBox="0 0 24 24">
    <rect x="1" y="1" width="22" height="22" rx="5" fill="#fff" stroke="#30a090" strokeWidth="2" />
    <text x="12" y="17" textAnchor="middle" fontSize="13" fontStyle="italic" fontWeight="700" fill="#2050c0" fontFamily={FONT}>
      f(x)
    </text>
  </svg>,
  <Frame>
    <circle cx="11.5" cy="11.5" r="5" fill="none" stroke="#2a70d0" strokeWidth="2.2" />
  </Frame>,
];
const railIcons2: React.ReactNode[] = [
  <Frame>
    <path d="M3 8 l3 -2 l3 2 l3 -2 l3 2 l3 -2 l2 2" fill="none" stroke="#e03030" strokeWidth="1.3" />
    <path d="M3 14 l3 -2 l3 2 l3 -2 l3 2 l3 -2 l2 2" fill="none" stroke="#3050d0" strokeWidth="1.3" />
  </Frame>,
  <svg width="28" height="20" viewBox="0 0 28 20">
    <text x="14" y="16" textAnchor="middle" fontSize="15" fontWeight="700" fill="#2a4ab0" fontFamily={FONT}>
      RSI
    </text>
  </svg>,
  <svg width="24" height="26" viewBox="0 0 24 26">
    <path d="M12 1 l4 4 h-8z" fill="#d02020" />
    <text x="12" y="23" textAnchor="middle" fontSize="21" fontWeight="700" fill="#d82828" stroke="#999" strokeWidth=".5" fontFamily={FONT}>
      S
    </text>
  </svg>,
  <svg width="26" height="26" viewBox="0 0 26 26">
    <path
      d="M13 1 l4 5 h-2.5 v5.500 h5.500 v-2.500 l5 4 l-5 4 v-2.500 h-5.500 v5.500 h2.500 l-4 5 l-4 -5 h2.500 v-5.500 h-5.500 v2.500 l-5 -4 l5 -4 v2.500 h5.500 v-5.500 h-2.500z"
      fill="#1a50c8"
    />
  </svg>,
  <svg width="24" height="24" viewBox="0 0 24 24">
    <path d="M18 2 L22 6 L8 20 L2 22 L4 16Z" fill="#f0b030" stroke="#8a6a20" />
    <path d="M18 2 L22 6 L20 8 L16 4Z" fill="#e06060" />
    <path d="M4 16 L8 20 L2 22Z" fill="#444" />
  </svg>,
];
const railIcons3: React.ReactNode[] = [
  <Frame>{iconText("F5")}</Frame>,
  <Frame>
    <path d="M5 10 a7 6 0 0 1 12 -2 l2 -2 v6 h-6 l2 -2 a5 4 0 0 0 -8 1z" fill="#48b848" />
    <path d="M18 13 a7 6 0 0 1 -12 2 l-2 2 v-6 h6 l-2 2 a5 4 0 0 0 8 -1z" fill="#48b848" />
  </Frame>,
];
const railPeriods = ["1", "5", "15", "30", "60", "日", "周", "月", "N", "多", "季", "年"];

/* ---------- data ---------- */
const menuItems = ["行情", "市场", "资讯", "数据", "专题", "发现", "交易", "行业", "热点", "L1L2"];
const periods = ["分时", "1分钟", "5分钟", "15分钟", "30分钟", "60分钟", "日线", "周线", "月线", "多周期"];
const toolItems = ["复权", "叠加", "统计", "画线", "F10", "标记", "-自选", "返回"];
const sellers = [["卖五", "11.40", "23.6"], ["卖四", "11.39", "12.5"], ["卖三", "11.38", "15.0"], ["卖二", "11.37", "38.4"], ["卖一", "11.36", "92.8"]];
const buyers = [["买一", "11.35", "18.6"], ["买二", "11.34", "27.2"], ["买三", "11.33", "43.7"], ["买四", "11.32", "12.3"], ["买五", "11.31", "37.5"]];
const MAGENTA = "#c000c0";
const RED = "#ff3030";
const statsA: [string, string, string, string, string, string?][] = [
  ["今开", "11.58", GREEN, "均价", "11.37", GREEN],
  ["最高", "11.58", GREEN, "量比", "0.77", GREEN],
  ["最低", "11.27", GREEN, "市值", "32.5亿", GRAY],
  ["现量", "1434", MAGENTA, "总量", "108961", GRAY],
  ["外盘", "49107", RED, "内盘", "59854", GREEN],
];
const statsB: [string, string, string, string, string, string?][] = [
  ["换手", "3.80%", GRAY, "股本", "2.87亿", GRAY],
  ["净资", "1.22", GRAY, "流通", "2.87亿", GRAY],
  ["收益(三)", "0.650", GRAY, "PE(动)", "14.5", GRAY],
];
const trades: [string, string, string, string, number][] = [
  ["14:55", "11.35", "2.3", "B", 6], ["14:55", "11.35", "2.8", "B", 4], ["14:55", "11.35", "2.4", "B", 5], ["14:55", "11.35", "0.1", "S", 1],
  ["14:56", "11.35", "0.2", "S", 1], ["14:56", "11.35", "1.9", "S", 1], ["14:56", "11.36", "2.2", "B", 2], ["14:56", "11.36", "1.4", "B", 3],
  ["14:56", "11.36", "6.7", "B", 8], ["14:56", "11.36", "6.0", "B", 10], ["14:56", "11.36", "9.8", "B", 9], ["14:56", "11.35", "0.2", "B", 2],
  ["14:56", "11.36", "20.4", "B", 9], ["14:56", "11.36", "7.4", "S", 4], ["14:56", "11.37", "2.2", "B", 3], ["14:56", "11.36", "3.3", "S", 4],
  ["14:56", "11.37", "1.1", "B", 2], ["14:56", "11.36", "2.0", "S", 1], ["14:56", "11.36", "2.3", "S", 1], ["14:56", "11.36", "56.0", "S", 14],
  ["14:56", "11.36", "1.9", "B", 3], ["14:56", "11.36", "1.0", "B", 2], ["15:00", "11.35", "162.8", "", 145],
];
const tabsA: [string, number, string?][] = [
  ["指标", 44], ["窗口", 46], ["MACD", 63], ["VOL-TDX", 87, "#40e8f0"], ["CCI", 44], ["趋势动力", 84], ["主力监控", 84], ["私募主图", 84],
  ["MA2", 46], ["测试主图", 84], ["测试幅图A", 95], ["测试幅图B", 96], ["更多", 48], ["设置", 48],
];
const tabsB: [string, number, string?][] = [
  ["扩展∧", 61], ["关联报价", 84], ["资金分布", 85], ["综合资讯", 82, OLIVE], ["行业资讯", 85, OLIVE], ["互动问答", 84, OLIVE], ["新用户福利专享", 138],
];

const withUnit = (v: string) => {
  const m = v.match(/^(.*?)([万亿])$/);
  return m ? (
    <>
      {m[1]}
      <Unit>{m[2]}</Unit>
    </>
  ) : (
    v
  );
};

const DEPTH_COLS = "91px 70px 168px";
const STAT_COLS = "91px 70px 90px 78px";
const FLOW_COLS = "104px 87px 78px 60px";
const TRADE_COLS = "91px 66px 94px 46px 32px";

const DepthRows = ({ rows, h }: { rows: string[][]; h: number }) => (
  <>
    {rows.map(([l, p, v], i) => (
      <Row key={l} $h={h} $cols={DEPTH_COLS}>
        <Label>
          {l}
          {i === 0 && l === "卖五" && <Unit> ￥</Unit>}
        </Label>
        <Num>{p}</Num>
        <Num $color={OLIVE}>
          {v}
          <Unit>万</Unit>
        </Num>
      </Row>
    ))}
  </>
);

const StatRows = ({ rows, h }: { rows: typeof statsA; h: number }) => (
  <>
    {rows.map(([l, v, c, l2, v2, c2]) => (
      <Row key={l} $h={h} $cols={STAT_COLS}>
        <Label>{l}</Label>
        <Num $color={c}>{v}</Num>
        <Label $pl={9}>{l2}</Label>
        <Num $color={c2}>{withUnit(v2)}</Num>
      </Row>
    ))}
  </>
);

export default function App() {
  return (
    <Page>
      <GlobalStyle />
      <TitleBar>
        <AppLogo />
        <AppName>通达信金融终端</AppName>
        {menuItems.map((m) => (
          <MenuItem key={m}>{m}</MenuItem>
        ))}
        <LoginInfo>
          <span>交易未登录</span>
          <span>昂立教育</span>
        </LoginInfo>
        <RightMenu>
          {["功能", "版面", "公式", "选项", "帮助"].map((m) => (
            <span key={m}>{m}</span>
          ))}
        </RightMenu>
        <ClockCell>
          <span>16:17:58</span>
          <span>周四</span>
        </ClockCell>
        <WindowButtons>
          <svg width="12" height="18" viewBox="0 0 12 18"><path d="M9 2 L3 9 L9 16" fill="none" stroke="#333" strokeWidth="2.4" /></svg>
          <svg width="14" height="14" viewBox="0 0 14 14" style={{ marginLeft: 6 }}><rect x="1" y="6" width="12" height="3" fill="#333" /></svg>
          <svg width="17" height="17" viewBox="0 0 17 17" style={{ marginLeft: 4 }}>
            <path d="M5 1 h11 v10 h-3 M1 5 h11 v11 h-11z M1 5 v2 h11" fill="none" stroke="#333" strokeWidth="2" />
          </svg>
          <svg width="16" height="16" viewBox="0 0 16 16"><path d="M2 2 L14 14 M14 2 L2 14" stroke="#333" strokeWidth="2.2" /></svg>
        </WindowButtons>
      </TitleBar>

      <Body>
        <MainColumn>
          <Toolbar>
            <ToggleCell>
              <PanelToggle />
            </ToggleCell>
            <PeriodList>
              {periods.map((p) => (
                <Period key={p} $active={p === "日线"}>{p}</Period>
              ))}
              <Period>
                更多
                <Chevron />
              </Period>
            </PeriodList>
            <ToolCells>
              {toolItems.map((t) => (
                <ToolCell key={t}>{t}</ToolCell>
              ))}
            </ToolCells>
          </Toolbar>

          <PricePane>
            <InfoRow>
              <Tag>昂立教育(日线)</Tag>
              <RoundBadge $ml={9} $mr={9}><ChevronBadge /></RoundBadge>
              <Tag>秘线主图</Tag>
              <Tag $color="#e000e0" $ml={8} $size={17.3}>VARAB: 11.20</Tag>
              <TickArrow up color="#ff2020" />
              <Tag $color="#e0e000" $ml={12} $size={17.3}>: 11.20</Tag>
              <TickArrow up color="#ff2020" />
              <Tag $ml={72}>倒拔杨柳: -</Tag>
              <Tag $ml={8}>普通倒灌: -</Tag>
              <Tag $color="#f01010" $ml={5}>起拔: 9.30</Tag>
              <Tag $color="#9020f0" $ml={15}>秘线: 11.22</Tag>
              <Corner>
                <svg width="14" height="16" viewBox="0 0 14 16"><path d="M7 1 L13 8 L7 15 L1 8Z" fill="none" stroke="#888" /></svg>
                <PanelToggle size={14} />
              </Corner>
            </InfoRow>
            <PriceChart />
          </PricePane>

          <VolumePane>
            <LegendRow>
              <RoundBadge $ml={0}><ChevronBadge /></RoundBadge>
              <Tag>VOL-TDX(5,10)</Tag>
              <Tag $ml={10}>VVOL: 108961.45</Tag>
              <TickArrow up color="#ff2020" />
              <Tag $color="#e0e000" $ml={19}>VOLUME: 108961.45</Tag>
              <TickArrow color="#55ffff" />
              <Tag $color="#e0e000" $ml={14}>MA5: 146299.41</Tag>
              <TickArrow up color="#ff2020" />
              <Tag $color="#e000e0" $ml={14}>MA10: 131686.92</Tag>
              <TickArrow color="#55ffff" />
            </LegendRow>
            <VolumeChart />
            <ImeBar>
              <ImeCell $w={20} $color="#800000">A</ImeCell>
              <ImeCell $w={71}>极品五笔</ImeCell>
              <ImeCell $w={19}>
                <svg width="10" height="14" viewBox="0 0 10 14"><path d="M6 1 A6 6 0 1 1 2 12 A7 7 0 0 0 6 1Z" fill="#111" /></svg>
              </ImeCell>
              <ImeCell $w={18}>·,</ImeCell>
              <ImeCell $w={19}>
                <svg width="15" height="11" viewBox="0 0 15 11"><rect x=".5" y=".5" width="14" height="10" fill="#ddd" stroke="#666" /><path d="M2 3 h11 M2 5.500 h11 M2 8 h11" stroke="#666" strokeDasharray="1 1" /></svg>
              </ImeCell>
            </ImeBar>
          </VolumePane>

          <DateAxis />

          <TabRow $h={25}>
            {tabsA.map(([t, w, c]) => (
              <TabCell key={t} $w={w} $color={c}>{t}</TabCell>
            ))}
            <TabCell $w={709} />
            <TabCell $w={43}>模板</TabCell>
            <TabCell $w={41}>+</TabCell>
          </TabRow>
          <TabRow $h={28}>
            {tabsB.map(([t, w, c]) => (
              <TabCell key={t} $w={w} $color={c}>{t}</TabCell>
            ))}
          </TabRow>
        </MainColumn>

        <QuotePanel>
          <QuoteHead>
            <NameRow>
              <StockName>昂立教育</StockName>
              <StockCode>600661</StockCode>
              <StockFlag>R</StockFlag>
            </NameRow>
            <PriceRow>
              <span>11.35</span>
              <span style={{ marginLeft: 45 }}>▼-0.28</span>
              <span style={{ marginLeft: "auto" }}>-2.41%</span>
            </PriceRow>
          </QuoteHead>
          <DepthGrid>
            <DepthRows rows={sellers} h={27.2} />
          </DepthGrid>
          <SplitLine />
          <DepthGrid>
            <DepthRows rows={buyers} h={27.2} />
          </DepthGrid>
          <Rule />
          <DepthGrid $pt={1}>
            <StatRows rows={statsA} h={28.8} />
          </DepthGrid>
          <Rule />
          <DepthGrid $pb={7}>
            <StatRows rows={statsB} h={28.2} />
          </DepthGrid>
          <Rule />
          <DepthGrid $pb={3}>
            <Row $h={29} $cols={FLOW_COLS}>
              <Label>净流入额</Label>
              <FlowBar style={{ width: 66 }} />
              <Num>-1214<Unit>万</Unit></Num>
              <Num>-10%</Num>
            </Row>
            <Row $h={29} $cols={FLOW_COLS}>
              <Label>大宗流入</Label>
              <FlowBar style={{ width: 1 }} />
              <Num>-15.6<Unit>万</Unit></Num>
              <Num>-0%</Num>
            </Row>
          </DepthGrid>
          <Rule />
          {trades.map(([t, p, v, f, n], i) => (
            <Row key={i} $h={27} $cols={TRADE_COLS}>
              <TimeCell>{t}</TimeCell>
              <Num>{p}</Num>
              <Num $color={f ? OLIVE : MAGENTA}>
                {v}
                <Unit>万</Unit>
              </Num>
              <Num $center $color={f === "B" ? RED : GREEN}>{f}</Num>
              <Num $color="#a8a8a8">{n}</Num>
            </Row>
          ))}
        </QuotePanel>

        <Rail>
          {railIcons.map((ic, i) => (
            <RailItem key={i}>{ic}</RailItem>
          ))}
          <RailSep />
          {railIcons2.map((ic, i) => (
            <RailItem key={i}>{ic}</RailItem>
          ))}
          <RailSep />
          {railIcons3.map((ic, i) => (
            <RailItem key={i}>{ic}</RailItem>
          ))}
          {railPeriods.map((p) => (
            <RailItem key={p} $active={p === "日"}>{p}</RailItem>
          ))}
        </Rail>
      </Body>

      <StatusBar>
        <svg width="18" height="24" viewBox="0 0 18 24">
          <rect x=".5" y=".5" width="17" height="23" rx="2" fill="#f0b838" stroke="#b88020" />
          <rect x="4" y="6" width="10" height="11" fill="#f8e098" />
        </svg>
        <StatusTag $ml={3} $size={23}>上证</StatusTag>
        <StatusTag $ml={8} $color="#f00000">3285.67</StatusTag>
        <StatusTag $ml={32} $color="#f00000">0.75</StatusTag>
        <StatusTag $ml={30} $color="#f00000">0.02%</StatusTag>
        <StatusTag $ml={27} $color="#000">4287亿</StatusTag>
        <StatusTag $ml={25} $size={23}>沪深</StatusTag>
        <StatusTag $ml={7} $color="#0a8a0a">4181.15</StatusTag>
        <StatusTag $ml={18} $color="#0a8a0a">-14.78</StatusTag>
        <StatusTag $ml={21} $color="#0a8a0a">-0.35%</StatusTag>
        <StatusTag $ml={21} $color="#000">2625亿</StatusTag>
        <StatusTag $ml={27} $size={23}>创业</StatusTag>
        <StatusTag $ml={7} $color="#0a8a0a">2602.32</StatusTag>
        <StatusTag $ml={18} $color="#0a8a0a">-11.37</StatusTag>
        <StatusTag $ml={22} $color="#0a8a0a">-0.44%</StatusTag>
        <StatusTag $ml={20} $color="#000">2117亿</StatusTag>
        <StatusTag $ml={36} $size={23}>总成交</StatusTag>
        <StatusTag $ml={6} $color="#000">1</StatusTag>
      </StatusBar>

      <Banner>
        <BannerTitle>公式指标网</BannerTitle>
        <BannerLogo />
        <BannerUrl>www.9m8.cn</BannerUrl>
      </Banner>
    </Page>
  );
}
